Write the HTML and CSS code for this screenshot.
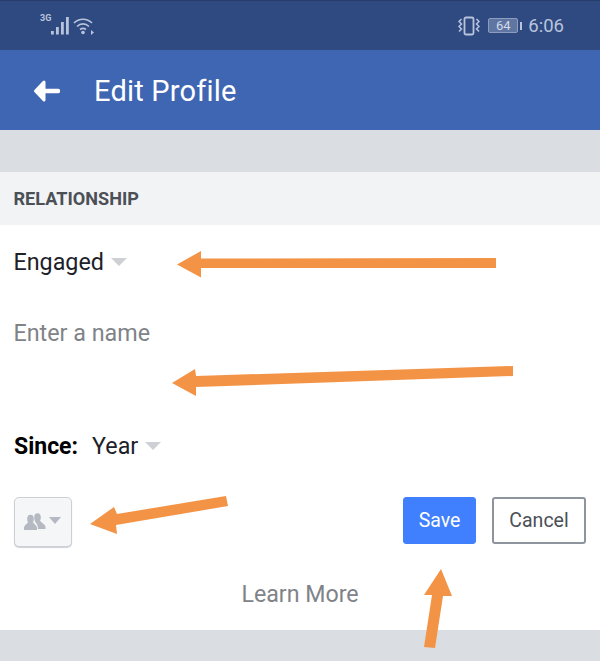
FILE: index.html
```html
<!DOCTYPE html>
<html lang="en">
<head>
<meta charset="utf-8">
<title>Edit Profile</title>
<link rel="stylesheet" href="styles.css">
</head>
<body>
<div class="page">
  <header class="status">
    <div class="status-left">
      <span class="net">3G</span>
      <svg class="signal" width="19" height="18" viewBox="0 0 19 18"><g fill="#b9c4dc"><rect x="0" y="14" width="2.800" height="3.500"/><rect x="5" y="10" width="2.800" height="7.500"/><rect x="10" y="5" width="2.800" height="12.500"/><rect x="15" y="0" width="2.800" height="17.500"/></g></svg>
      <svg class="wifi" width="22" height="18" viewBox="0 0 22 18"><g fill="none" stroke="#b9c4dc" stroke-width="1.700"><path d="M1 6 C6 1 14 1 19 6"/><path d="M4 9.500 C7.500 6 12.500 6 16 9.500"/><path d="M7 12.500 C9 11 11 11 13 12.500"/></g><circle cx="10" cy="15.500" r="1.800" fill="#b9c4dc"/><path d="M18 13 L21 15.500 L18 18 Z" fill="#b9c4dc"/></svg>
    </div>
    <div class="status-right">
      <svg class="vibrate" width="22" height="20" viewBox="0 0 22 20"><rect x="6.500" y="1.500" width="9" height="17" rx="1.500" fill="none" stroke="#b9c4dc" stroke-width="1.800"/><g fill="none" stroke="#b9c4dc" stroke-width="1.500"><path d="M3.500 3 L1 5.500 L3.500 8 L1 10.500 L3.500 13 L1 15.500"/><path d="M18.500 3 L21 5.500 L18.500 8 L21 10.500 L18.500 13 L21 15.500"/></g></svg>
      <div class="battery"><span class="battery-body">64</span><span class="battery-tip"></span></div>
      <span class="time">6:06</span>
    </div>
  </header>
  <div class="appbar">
    <svg class="back" width="28" height="24" viewBox="0 0 28 24"><path d="M12 3 L3.500 12 L12 21 Z" fill="#fff" stroke="#fff" stroke-width="3" stroke-linejoin="round"/><path d="M6 12 H26" fill="none" stroke="#fff" stroke-width="4.400" stroke-linecap="round"/></svg>
    <h1 class="title">Edit Profile</h1>
  </div>
  <div class="spacer"></div>
  <section class="card">
    <h2 class="section-head">RELATIONSHIP</h2>
    <div class="field-status">
      <span class="value">Engaged</span><span class="caret"></span>
    </div>
    <div class="field-name">Enter a name</div>
    <div class="field-since">
      <span class="since-label">Since:</span>
      <span class="value">Year</span><span class="caret"></span>
    </div>
    <div class="actions">
      <button class="privacy" type="button">
        <svg width="22" height="18" viewBox="0 0 22 18"><g fill="#b5b9c2"><ellipse cx="13.500" cy="4.500" rx="3.300" ry="4.300"/><path d="M10.500 8 H16.500 C17 10 21.500 11 21.500 14 V16 H14 C14 13 13 10.500 10.500 8 Z"/><ellipse cx="6.500" cy="6" rx="3.300" ry="4.300"/><path d="M3.500 9.500 H9.500 C10 11.500 13 12 13 15 V17 H0 V15 C0 12 3 11.500 3.500 9.500 Z"/></g></svg>
        <span class="caret small"></span>
      </button>
      <div class="buttons">
        <button class="btn save" type="button">Save</button>
        <button class="btn cancel" type="button">Cancel</button>
      </div>
    </div>
    <div class="learn">Learn More</div>
  </section>
  <svg class="arrows" width="600" height="661" viewBox="0 0 600 661">
    <g fill="#f39346">
      <polygon points="496,258 201,258.500 201,251 177,264.500 201,277.500 201,268 496,268"/>
      <polygon points="513,366 196,376 195,369 172,383 196,396 196,387 513,376"/>
      <polygon points="226,496 117,514 114,507 90,524 117,534 116,525 228,506"/>
      <polygon points="424,647 432,595 424,595 441,569 452,596 443,596 435,648"/>
    </g>
  </svg>
</div>
</body>
</html>
```
FILE: styles.css
```css
* { box-sizing: border-box; }
html, body { margin: 0; padding: 0; }
body { background: #dadde1; font-family: Roboto, "Liberation Sans", sans-serif; }
.page { position: relative; width: 600px; height: 661px; overflow: hidden; background: #dadde1; }
.status { height: 50px; background: #2f4a80; border-top: 1px solid #263d6c; display: flex; justify-content: space-between; align-items: center; padding: 0 36px 0 40px; }
.status-left { display: flex; align-items: flex-end; height: 20px; margin-top: -2px; }
.net { font-size: 9px; font-weight: 700; color: #b9c4dc; align-self: flex-start; line-height: 9px; margin-top: -1px; }
.signal { margin-left: 0; }
.wifi { margin-left: 3px; }
.status-right { display: flex; align-items: center; }
.vibrate { margin-right: 8px; }
.battery { display: flex; align-items: center; margin-right: 6px; }
.battery-body { width: 30px; height: 15px; background: #5f76a3; border: 1px solid #8d9dbd; border-radius: 2px; color: #d3daea; font-size: 13px; line-height: 13px; text-align: center; }
.battery-tip { width: 2px; height: 8px; background: #b9c4dc; margin-left: 2px; }
.time { font-size: 18.500px; color: #b9c4dc; }
.appbar { height: 80px; background: #3f66b2; display: flex; align-items: center; padding: 2px 0 0 32px; }
.back { flex: none; }
.title { margin: 0 0 0 34px; font-size: 29px; font-weight: 400; color: #fff; letter-spacing: 0.200px; }
.spacer { height: 42px; }
.card { background: #fff; height: 458px; }
.section-head { margin: 0; height: 53px; background: #f2f3f5; font-size: 18.100px; font-weight: 700; line-height: 53px; padding-left: 13.500px; color: #4b4f56; }
.value { font-size: 23.300px; color: #1d2129; }
.caret { display: inline-block; width: 0; height: 0; border-left: 8px solid transparent; border-right: 8px solid transparent; border-top: 8px solid #ced0d4; margin-left: 7px; vertical-align: 4px; }
.caret.small { border-left-width: 6.500px; border-right-width: 6.500px; border-top-width: 7px; border-top-color: #b5b9c2; margin-left: 3px; margin-bottom: 4px; }
.field-status { padding: 21px 13.500px 0; height: 84px; line-height: 32px; }
.field-name { height: 100px; padding: 10px 13.500px 0; font-size: 23.300px; line-height: 28px; color: #7f8388; }
.field-since { display: flex; align-items: center; height: 88px; padding: 0 14px 14px; }
.since-label { font-size: 23px; font-weight: 700; color: #000; margin-right: 14px; }
.actions { display: flex; justify-content: space-between; align-items: flex-start; padding: 0 14px; height: 50px; }
.privacy { width: 58px; height: 50px; background: #f5f6f7; border: 1px solid #ccd0d5; border-radius: 5px; box-shadow: 0 1px 1px #ccd0d5; padding: 0 0 0 9px; display: flex; align-items: center; }
.buttons { display: flex; gap: 16px; }
.btn { height: 47px; font-family: inherit; font-size: 19.500px; border-radius: 3px; padding: 0; }
.save { width: 73px; background: #4080ff; border: 1px solid #4080ff; color: #fff; }
.cancel { width: 94px; background: #fff; border: 2px solid #8d949e; color: #4b4f56; }
.learn { text-align: center; margin-top: 33px; font-size: 23.200px; color: #7f8388; }
.arrows { position: absolute; left: 0; top: 0; pointer-events: none; }
```
